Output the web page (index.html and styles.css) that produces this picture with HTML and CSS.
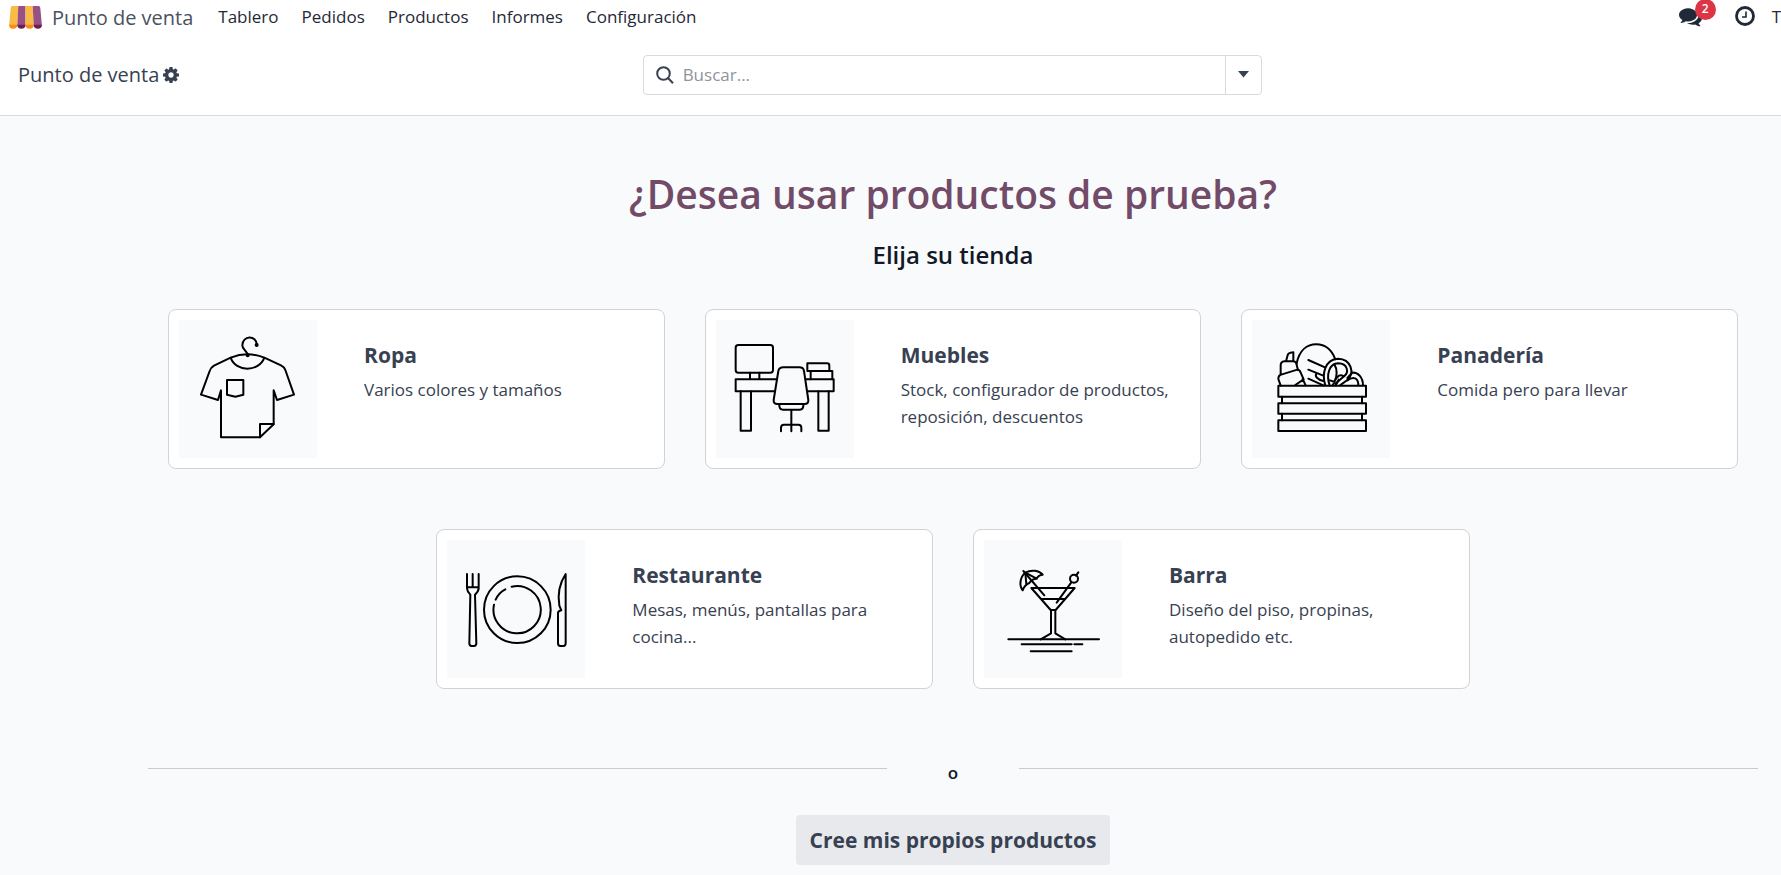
FILE: index.html
```html
<!DOCTYPE html>
<html lang="es">
<head>
<meta charset="utf-8">
<title>Punto de venta</title>
<link rel="stylesheet" href="styles.css">
</head>
<body>
<header class="navbar">
  <a class="brand" href="#">
    <svg class="brand-logo" viewBox="0 0 100 70" aria-hidden="true">
      <path fill="#fbb945" d="M10 0H28L25 60H0L5 5Q6 0 10 0Z"/>
      <path fill="#985184" d="M28 0H50V60H25Z"/>
      <path fill="#fbb945" d="M50 0H72L75 60H50Z"/>
      <path fill="#985184" d="M72 0H90Q94 0 95 5L100 60H75Z"/>
      <path fill="#fc8a14" d="M0 57H25A12.500 12.500 0 0 1 0 57ZM50 57H75A12.500 12.500 0 0 1 50 57Z"/>
      <path fill="#6b1e55" d="M25 57H50A12.500 12.500 0 0 1 25 57ZM75 57H100A12.500 12.500 0 0 1 75 57Z"/>
    </svg>
    <span>Punto de venta</span>
  </a>
  <nav class="menu">
    <a href="#">Tablero</a>
    <a href="#">Pedidos</a>
    <a href="#">Productos</a>
    <a href="#">Informes</a>
    <a href="#">Configuración</a>
  </nav>
  <div class="systray">
    <button class="tray-button" type="button" aria-label="Mensajes">
      <svg class="tray-icon tray-icon-chat" viewBox="0 0 1792 1792" aria-hidden="true"><path fill="currentColor" d="M1408 768q0 139-94 257t-256.500 186.500-353.500 68.500q-86 0-176-16-124 88-278 128-36 9-86 16h-3q-11 0-20.500-8t-11.500-21q-1-3-1-6.500t.5-6.500 2-6l2.500-5 3.500-5.500 4-5 4.500-5 4-4.500q5-6 23-25t26-29.500 22.500-29 25-38.500 20.500-44q-124-72-195-177t-71-224q0-139 94-257t256.500-186.500 353.500-68.500 353.500 68.500 256.500 186.500 94 257zm384 256q0 120-71 224.500t-195 176.500q10 24 20.500 44t25 38.500 22.500 29 26 29.500 23 25q1 1 4 4.500t4.500 5 4 5 3.500 5.500l2.500 5 2 6 .5 6.500-1 6.500q-3 14-13 22t-22 7q-50-7-86-16-154-40-278-128-90 16-176 16-271 0-472-132 58 4 88 4 161 0 309-45t264-129q125-92 192-212t67-254q0-77-23-152 129 71 204 178t75 230z"/></svg>
      <span class="badge">2</span>
    </button>
    <button class="tray-button" type="button" aria-label="Actividades">
      <svg class="tray-icon" viewBox="0 0 20 20" fill="none" stroke="currentColor" aria-hidden="true"><circle cx="10" cy="10" r="8.500" stroke-width="2.800"/><path d="M11 5.500V11H7" stroke-width="1.600"/></svg>
    </button>
    <span class="company">T</span>
  </div>
</header>

<div class="control-panel">
  <div class="breadcrumb">
    <span>Punto de venta</span>
    <button class="gear" type="button" aria-label="Acciones">
      <svg viewBox="0 128 1536 1536" aria-hidden="true"><path fill="currentColor" d="M1024 896q0-106-75-181t-181-75-181 75-75 181 75 181 181 75 181-75 75-181zm512-109v222q0 12-8 23t-20 13l-185 28q-19 54-39 91 35 50 107 138 10 12 10 25t-9 23q-27 37-99 108t-94 71q-12 0-26-9l-138-108q-44 23-91 38-16 136-29 186-7 28-36 28h-222q-14 0-24.500-8.500t-11.500-21.500l-28-184q-49-16-90-37l-141 107q-10 9-25 9-14 0-25-11-126-114-165-168-7-10-7-23 0-12 8-23 15-21 51-66.500t54-70.500q-27-50-41-99l-183-27q-13-2-21-12.500t-8-23.500v-222q0-12 8-23t19-13l186-28q14-46 39-92-40-57-107-138-10-12-10-24 0-10 9-23 26-36 98.500-107.500t94.500-71.500q13 0 26 10l138 107q44-23 91-38 16-136 29-186 7-28 36-28h222q14 0 24.500 8.500t11.500 21.500l28 184q49 16 90 37l142-107q9-9 24-9 13 0 25 10 129 119 165 170 7 8 7 22 0 12-8 23-15 21-51 66.500t-54 70.500q26 50 41 98l183 28q13 2 21 12.500t8 23.500z"/></svg>
    </button>
  </div>
  <form class="search" role="search">
    <label class="search-label" for="search">
      <svg viewBox="0 0 18 18" fill="none" stroke="currentColor" stroke-width="2" aria-label="Buscar"><circle cx="7.500" cy="7.500" r="6.300"/><path d="M12 12L17 17.300"/></svg>
    </label>
    <input class="search-input" id="search" type="text" placeholder="Buscar...">
    <button class="search-toggle" type="button" aria-label="Opciones de búsqueda">
      <svg viewBox="0 0 10 6" aria-hidden="true"><path fill="currentColor" d="M0 0H10L5 6Z"/></svg>
    </button>
  </form>
</div>

<main class="content">
  <h1 class="title">¿Desea usar productos de prueba?</h1>
  <h2 class="subtitle">Elija su tienda</h2>

  <div class="shops">
    <article class="card">
      <svg class="thumb" viewBox="0 0 414 414" aria-hidden="true">
        <path d="M234 75C232 44 190 46 190 76C190 92 206 90 206 108"/>
        <circle class="solid" cx="233" cy="75" r="3"/><circle class="solid" cx="206" cy="106" r="3"/>
        <path d="M155 113L105 137Q95 143 92 153L66 224L117 240L126 211V352H243L284 313V211L294 240L345 224L319 150Q316 141 306 136L256 113Q206 93 155 113C170 157 240 157 256 113"/>
        <path d="M144 180H193V224L169 230L144 224ZM243 352V312H284"/>
      </svg>
      <div class="card-body">
        <h3 class="card-title">Ropa</h3>
        <p class="card-text">Varios colores y tamaños</p>
      </div>
    </article>
    <article class="card">
      <svg class="thumb" viewBox="0 0 414 414" aria-hidden="true">
        <rect x="59" y="75" width="112" height="83" rx="8"/>
        <path d="M102 158V178M130 158V178M182 178H59V214H177M270 178H353V214H274"/>
        <path d="M74 214V332H105V214M307 214V332H338V214"/>
        <path d="M202 142H250Q262 142 264 153L277 240Q278 252 266 252H184Q172 252 173 240L187 153Q189 142 202 142Z"/>
        <path d="M190 252V258Q191 269 201 269H252Q261 269 262 258V252M226 269V334M195 334V323Q195 314 204 314H247Q256 314 256 323V334"/>
        <path d="M274 130H333Q340 130 340 137V153H274ZM340 153H349V178M284 153V178"/>
      </svg>
      <div class="card-body">
        <h3 class="card-title">Muebles</h3>
        <p class="card-text">Stock, configurador de productos, reposición, descuentos</p>
      </div>
    </article>
    <article class="card">
      <svg class="thumb" viewBox="0 0 414 414" aria-hidden="true">
        <path d="M79 197H342V230H79ZM79 250H342V281H79ZM79 301H342V333H79Z"/>
        <path d="M90 230V250M330 230V250M90 281V301M330 281V301"/>
        <path d="M102 124L107 106Q108 98 124 97V124M86 161V136Q86 125 97 124H124Q134 125 134 135L138 150"/>
        <path d="M86 197L79 177Q79 165 90 163L136 149Q143 148 146 158L155 178L130 195M152 177L161 196"/>
        <path d="M134 130C142 91 165 73 193 73C222 73 240 92 250 118"/>
        <path d="M169 120L219 142M169 149L212 166M169 176L214 196M193 161C188 169 196 178 214 183"/>
        <path d="M220 196C209 163 218 118 258 116C298 117 309 160 286 180L264 196"/>
        <path d="M233 196C222 164 231 131 259 130C287 131 292 157 276 169L252 190"/>
        <path d="M247 133C257 148 255 170 248 183C257 166 265 162 275 169M234 181L248 186L242 196M251 196L260 179"/>
        <path d="M299 158C319 156 333 173 333 196M286 181C304 168 319 173 319 196M286 174L300 159"/>
      </svg>
      <div class="card-body">
        <h3 class="card-title">Panadería</h3>
        <p class="card-text">Comida pero para llevar</p>
      </div>
    </article>
    <article class="card">
      <svg class="thumb" viewBox="0 0 414 414" aria-hidden="true">
        <circle cx="211" cy="209" r="100"/>
        <path d="M194 140A71 71 0 1 1 141 194M146 179Q155 158 175 148"/>
        <path d="M60 102V145Q60 154 70 164L67 310Q67 318 74 318H81Q88 318 88 310L84 164Q95 154 95 145V102M77 102V142M60 142H95"/>
        <path d="M356 102V310Q356 318 349 318H340Q333 318 333 310V218Q334 213 343 211L337 197C332 166 336 132 356 102Z"/>
      </svg>
      <div class="card-body">
        <h3 class="card-title">Restaurante</h3>
        <p class="card-text">Mesas, menús, pantallas para cocina...</p>
      </div>
    </article>
    <article class="card">
      <svg class="thumb" viewBox="0 0 414 414" aria-hidden="true">
        <path d="M142 144H272L215 210H200ZM173 177H243M201 210V280L170 298M214 210V280L244 298"/>
        <path d="M73 298H345M113 313H263M271 313H295M140 334H263"/>
        <circle cx="270" cy="116" r="12"/>
        <path d="M283 97L276 107M262 127L218 188M118 93L181 166"/>
        <path d="M116 151C104 135 109 110 124 98C142 88 166 91 176 104Q163 105 158 116Q144 116 136 129Q122 134 116 151ZM124 98L158 116M124 98L127 133"/>
      </svg>
      <div class="card-body">
        <h3 class="card-title">Barra</h3>
        <p class="card-text">Diseño del piso, propinas, autopedido etc.</p>
      </div>
    </article>
  </div>

  <div class="divider">
    <hr class="divider-line">
    <span class="divider-text">o</span>
    <hr class="divider-line">
  </div>

  <button class="own-products" type="button">Cree mis propios productos</button>
</main>
</body>
</html>
```
FILE: styles.css
```css
* {
  box-sizing: border-box;
}

body {
  margin: 0;
  min-height: 100vh;
  background: #f9fafc;
  color: #374151;
  font-family: "Open Sans", "Noto Sans", sans-serif;
  font-size: 17px;
  line-height: 27px;
  overflow-x: hidden;
}

button,
input {
  margin: 0;
  padding: 0;
  border: 0;
  background: none;
  color: inherit;
  font: inherit;
}

a {
  color: inherit;
  text-decoration: none;
}

h1,
h2,
h3,
p {
  margin: 0;
}

svg {
  display: block;
}

.navbar {
  display: flex;
  align-items: center;
  height: 36px;
  padding: 0 0 2px 9px;
  background: #fff;
  color: #1f2937;
}

.brand {
  display: flex;
  align-items: center;
  gap: 10px;
  color: #4b5160;
  font-size: 20px;
}

.brand-logo {
  width: 33px;
  height: 23px;
}

.menu {
  display: flex;
  gap: 23px;
  margin-left: 25px;
  padding-bottom: 2px;
}

.systray {
  display: flex;
  align-items: center;
  margin-left: auto;
  padding-bottom: 2px;
}

.tray-button {
  position: relative;
  margin-right: 17px;
}

.tray-button:first-child {
  margin-right: 33px;
}

.tray-icon {
  width: 20px;
  height: 20px;
}

.tray-icon-chat {
  width: 23px;
  height: 23px;
}

.badge {
  position: absolute;
  top: -6px;
  left: 16px;
  width: 21px;
  height: 21px;
  border-radius: 50%;
  background: #dc3545;
  color: #fff;
  font-size: 12px;
  font-weight: 600;
  line-height: 20px;
  text-align: center;
}

.control-panel {
  display: grid;
  grid-template-columns: 625fr 620fr 519fr;
  align-items: center;
  height: 80px;
  padding: 0 0 2px 18px;
  border-bottom: 1px solid #d8dadd;
  background: #fff;
}

.breadcrumb {
  display: flex;
  align-items: center;
  gap: 4px;
  font-size: 20px;
}

.gear {
  width: 16px;
  color: #374151;
}

.search {
  display: flex;
  align-items: center;
  height: 40px;
  border: 1px solid #d8dadd;
  border-radius: 4px;
}

.search-label {
  flex: none;
  width: 18px;
  margin: 0 9px 0 12px;
}

.search-input {
  flex: 1;
  min-width: 0;
  outline: none;
}

.search-input::placeholder {
  color: #8f939b;
  opacity: 1;
}

.search-toggle {
  display: grid;
  place-items: center;
  width: 36px;
  height: 100%;
  border-left: 1px solid #d8dadd;
}

.search-toggle svg {
  width: 11px;
}

.content {
  display: flex;
  flex-direction: column;
  align-items: center;
  padding: 50px 23px 10px 148px;
}

.title {
  color: #714b67;
  font-size: 39px;
  font-weight: 600;
  line-height: 56px;
}

.subtitle {
  margin: 16px 0 37px;
  color: #111827;
  font-size: 24px;
  font-weight: 600;
  line-height: 34px;
}

.shops {
  display: flex;
  flex-wrap: wrap;
  justify-content: center;
  gap: 60px 40px;
  width: 100%;
  padding: 0 20px;
}

.card {
  display: flex;
  flex: 0 0 calc((100% - 80px) / 3);
  padding: 10px;
  border: 1px solid #d1d3d6;
  border-radius: 8px;
  background: #fff;
}

.thumb {
  flex: none;
  width: 138px;
  height: 138px;
  margin-right: 47px;
  background: #f9fafc;
  fill: none;
  stroke: #000;
  stroke-width: 6px;
  stroke-linecap: round;
  stroke-linejoin: round;
}

.solid {
  fill: #000;
}

.card-body {
  padding: 20px 20px 0 0;
}

.card-title {
  margin-bottom: 6px;
  font-size: 21px;
  font-weight: 700;
  line-height: 30px;
}

.divider {
  display: grid;
  grid-template-columns: 1fr 132px 1fr;
  align-items: start;
  width: 100%;
  margin: 69px 0 27px;
}

.divider-line {
  width: 100%;
  height: 1px;
  margin: 10px 0 0;
  border: 0;
  background: #c8cacd;
}

.divider-text {
  color: #111827;
  font-weight: 600;
  line-height: 30px;
  text-align: center;
}

.own-products {
  height: 50px;
  padding: 0 14px;
  border-radius: 4px;
  background: #e7e9ed;
  font-size: 21px;
  font-weight: 700;
}
```
